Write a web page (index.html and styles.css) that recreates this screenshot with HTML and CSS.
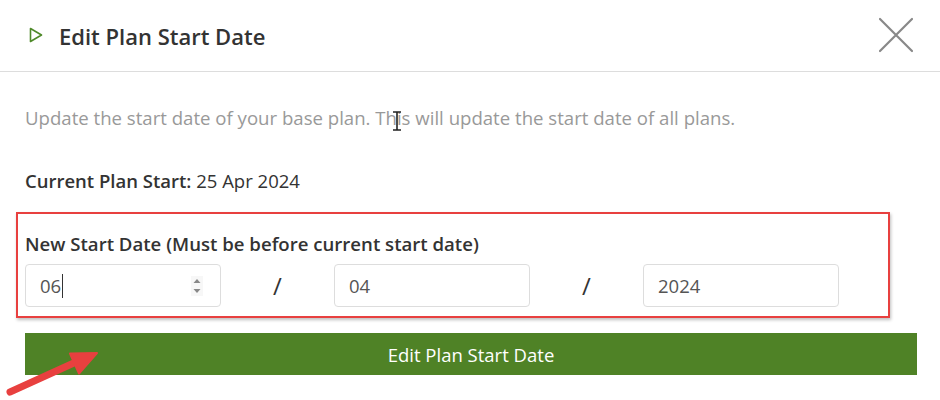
FILE: index.html
```html
<!DOCTYPE html>
<html lang="en">
<head>
  <meta charset="UTF-8" />
  <title>Edit Plan Start Date</title>
  <link rel="stylesheet" href="styles.css">
</head>
<body>

  <div class="modal">
    <div class="modal-header">
      <svg class="play-icon" width="14" height="16" viewBox="0 0 14 16">
        <path d="M1.5 1.5 L12.5 8 L1.5 14.5 Z" fill="none" stroke="#4f8a2a" stroke-width="1.6" stroke-linejoin="round"/>
      </svg>
      <h1>Edit Plan Start Date</h1>
      <svg class="close-icon" width="36" height="36" viewBox="0 0 36 36">
        <path d="M2 2 L34 34 M34 2 L2 34" stroke="#888" stroke-width="2.2" stroke-linecap="round"/>
      </svg>
    </div>

    <div class="modal-body">
      <p class="intro">Update the start date of your base plan. This will update the start date of all plans.</p>

      <p class="current"><strong>Current Plan Start:</strong> 25 Apr 2024</p>

      <div class="highlight">
        <label class="field-label">New Start Date (Must be before current start date)</label>
        <div class="date-row">
          <div class="date-input focused">
            <span>06</span><span class="caret"></span>
            <span class="spinner">
              <svg width="12" height="20" viewBox="0 0 12 20">
                <path d="M2.5 7 L6 3 L9.5 7 Z M2.5 13 L6 17 L9.5 13 Z" fill="#888"/>
              </svg>
            </span>
          </div>
          <div class="sep">/</div>
          <div class="date-input">04</div>
          <div class="sep">/</div>
          <div class="date-input">2024</div>
        </div>
      </div>

      <button class="submit-btn">Edit Plan Start Date</button>
    </div>
  </div>

  <!-- screenshot annotations -->
  <svg class="text-cursor" width="10" height="20" viewBox="0 0 10 20">
    <path d="M1 1 H9 M5 1 V19 M1 19 H9" stroke="#222" stroke-width="1.6" fill="none"/>
  </svg>
  <svg class="arrow" width="110" height="60" viewBox="0 0 110 60">
    <path d="M10 52 L76 22" stroke="#e8403f" stroke-width="7" stroke-linecap="round"/>
    <path d="M97 13 L70 13.5 L79 33.5 Z" fill="#e8403f" stroke="#e8403f" stroke-width="2" stroke-linejoin="round"/>
  </svg>

</body>
</html>
```

FILE: styles.css
```css
body {
  margin: 0;
  font-family: "Open Sans", sans-serif;
  background-color: #fff;
  color: #333;
  position: relative;
  width: 940px;
  height: 400px;
  overflow: hidden;
}

.modal-header {
  display: flex;
  align-items: center;
  height: 72px;
  padding: 0 26px 0 29px;
  border-bottom: 1px solid #ddd;
  box-sizing: border-box;
}

.play-icon {
  margin-right: 16px;
  margin-top: -1px;
}

.modal-header h1 {
  flex: 1;
  margin: 0;
  font-size: 22px;
  font-weight: 600;
  color: #333;
}

.close-icon {
  margin-top: -1px;
}

.modal-body {
  padding: 0 23px 0 25px;
}

.intro {
  margin: 0;
  padding-top: 33px;
  font-size: 18.6px;
  color: #999;
  line-height: 26px;
}

.current {
  margin: 37px 0 0;
  font-size: 18.5px;
  line-height: 26px;
}

.current strong {
  font-weight: 600;
}

.highlight {
  margin: 18px 0 0 -9px;
  width: 874px;
  box-sizing: border-box;
  border: 2px solid #e8403f;
  padding: 17px 7px 9px;
  box-shadow: 1px 2px 3px rgba(0, 0, 0, 0.25);
}

.field-label {
  display: block;
  font-size: 18.6px;
  font-weight: 600;
  line-height: 26px;
}

.date-row {
  display: grid;
  grid-template-columns: 196px 113px 196px 113px 196px;
  margin-top: 7px;
}

.date-input {
  display: flex;
  align-items: center;
  height: 43px;
  box-sizing: border-box;
  border: 1px solid #ddd;
  border-radius: 4px;
  padding: 0 14px;
  font-size: 18.5px;
  color: #555;
}

.caret {
  display: inline-block;
  width: 1px;
  height: 24px;
  background: #333;
  margin-left: 1px;
}

.spinner {
  margin-left: auto;
  margin-right: 3px;
  display: flex;
  background: #f7f7f7;
}

.sep {
  text-align: center;
  font-size: 24px;
  line-height: 43px;
  color: #333;
}

.submit-btn {
  display: block;
  width: 892px;
  height: 42px;
  margin-top: 15px;
  border: none;
  background-color: #4f8226;
  color: #fff;
  font-family: "Open Sans", sans-serif;
  font-size: 18.5px;
}

.text-cursor {
  position: absolute;
  left: 392px;
  top: 111px;
}

.arrow {
  position: absolute;
  left: 0;
  top: 340px;
}
```
